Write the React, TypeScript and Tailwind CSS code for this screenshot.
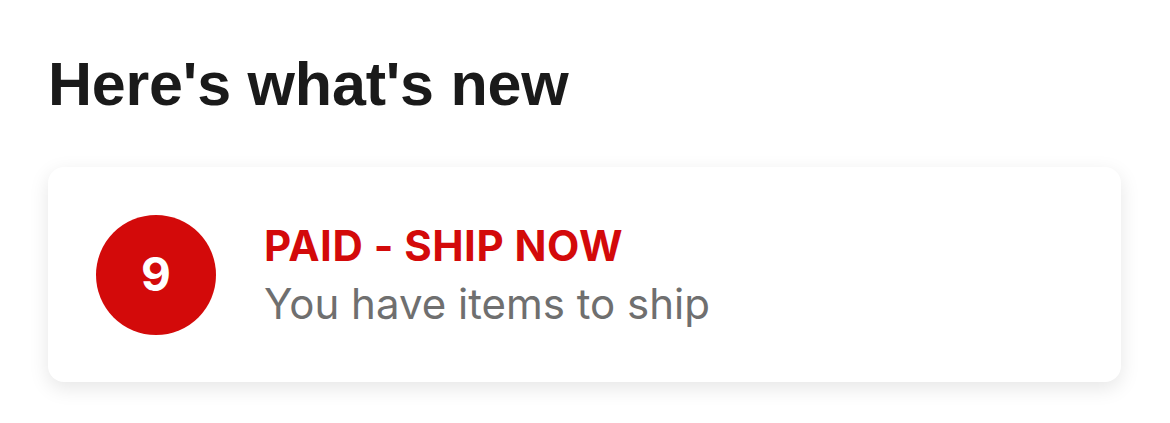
import React from "react";

export default function App() {
  return (
    <div className="w-[1170px] h-[423px] bg-white overflow-hidden px-12 pt-[54px]" style={{ fontFamily: '"Liberation Sans", Arial, sans-serif' }}>
      <h1 className="text-[61px] leading-[61px] font-bold text-[#1a1a1a] tracking-[-0.2px] ml-[0px]">Here's what's new</h1>
      <div className="mt-[52px] w-[1073px] h-[215px] rounded-[16px] bg-white shadow-[0_6px_20px_rgba(0,0,0,0.1)] flex items-center pl-12">
        <div className="w-[120px] h-[120px] rounded-full bg-[#d30a0a] flex items-center justify-center text-white text-[46px] font-bold" style={{ fontFamily: 'Inter, "Liberation Sans", sans-serif' }}>9</div>
        <div className="ml-[48px] flex flex-col" style={{ fontFamily: 'Inter, "Liberation Sans", sans-serif' }}>
          <div className="text-[42px] leading-[58px] font-bold text-[#d30a0a] tracking-[0.5px]">PAID - SHIP NOW</div>
          <div className="text-[42px] leading-[58px] text-[#6f6f6f] tracking-[0px]">You have items to ship</div>
        </div>
      </div>
    </div>
  );
}
